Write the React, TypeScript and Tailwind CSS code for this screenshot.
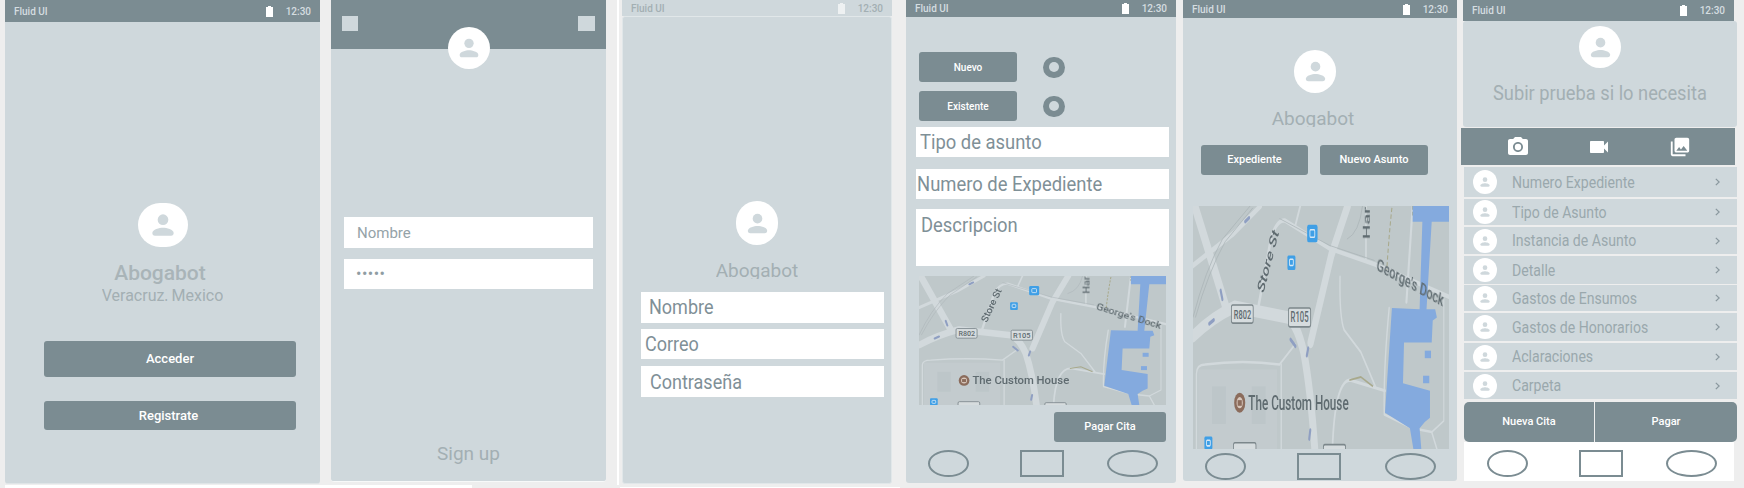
import React from "react";
import { MdPhotoCamera, MdVideocam, MdPhotoLibrary } from "react-icons/md";

function Person({ className }: { className: string }) {
  return (
    <svg viewBox="0 0 24 24" className={className} fill="currentColor" preserveAspectRatio="none">
      <circle cx="12" cy="8" r="4" />
      <path d="M4 18c0-2.7 5.3-4 8-4s8 1.3 8 4c0 1.2-.6 2-2 2H6c-1.4 0-2-.8-2-2z" />
    </svg>
  );
}

function Avatar({ className, icon = "w-[30px] h-[30px]" }: { className: string; icon?: string }) {
  return (
    <div className={"flex items-center justify-center rounded-full bg-white text-[#cfd8dc] shrink-0 " + className}>
      <Person className={icon} />
    </div>
  );
}

function Status({ className, textClass, iconColor = "bg-white" }: { className: string; textClass: string; iconColor?: string }) {
  return (
    <div className={"flex items-center justify-between px-[9px] text-[10px] font-medium shrink-0 " + className + " " + textClass}>
      <span>Fluid UI</span>
      <span className="flex items-center gap-[13px]">
        <span className="flex flex-col items-center">
          <span className={"w-[3px] h-[1px] " + iconColor} />
          <span className={"w-[7px] h-[10px] " + iconColor} />
        </span>
        <span>12:30</span>
      </span>
    </div>
  );
}

function Btn({ className, children }: { className: string; children: React.ReactNode }) {
  return (
    <div className={"flex items-center justify-center bg-[#7b8c92] text-white font-medium shrink-0 " + className}>
      {children}
    </div>
  );
}

function Nav({ className, o1, r, o2 }: { className: string; o1: string; r: string; o2: string }) {
  return (
    <div className={"flex h-[27px] shrink-0 " + className}>
      <div className={"h-[27px] w-[41px] rounded-[50%] border-2 border-[#7b8c92] " + o1} />
      <div className={"h-[27px] w-[44px] border-2 border-[#7b8c92] " + r} />
      <div className={"h-[27px] w-[51px] rounded-[50%] border-2 border-[#7b8c92] " + o2} />
    </div>
  );
}

function Field({ className, children }: { className: string; children: React.ReactNode }) {
  return <div className={"flex bg-white text-[#7f9097] text-[20px] shrink-0 overflow-hidden " + className}>{children}</div>;
}

function Sq({ className, children }: { className: string; children: React.ReactNode }) {
  return <span className={"inline-block whitespace-nowrap origin-left " + className}>{children}</span>;
}

function Radio() {
  return (
    <div className="ml-[26px] w-[22px] h-[21px] rounded-full bg-[#7b8c92] flex items-center justify-center">
      <div className="w-[10px] h-[10px] rounded-full bg-[#cfd8dc]" />
    </div>
  );
}

function MapView({ className }: { className: string }) {
  const road = "#d2d9dc";
  const rail = "#a9b3b6";
  const arrow = "#8f9fc2";
  return (
    <svg viewBox="45 17 740 388" preserveAspectRatio="none" className={"block shrink-0 blur-[0.6px] " + className}>
      <rect x="45" y="17" width="740" height="388" fill="#bfc8ca" />
      <rect x="60" y="278" width="228" height="127" fill="#c3cbce" />
      <rect x="100" y="305" width="40" height="60" fill="#bdc6c9" />
      <rect x="215" y="305" width="40" height="60" fill="#bdc6c9" />
      <g fill="none" stroke={road} strokeLinecap="round" strokeLinejoin="round">
        <path d="M45 225Q100 195 165 178L320 195Q345 205 365 250Q385 310 397 405" strokeWidth="20" />
        <path d="M50 17L140 178" strokeWidth="20" />
        <path d="M492 17L445 95L385 235" strokeWidth="18" />
        <path d="M45 112L160 62L240 17" strokeWidth="9" />
        <path d="M235 175L270 70Q285 40 310 40L440 85L570 110L785 162" strokeWidth="7" />
        <path d="M340 50L355 17" strokeWidth="5" />
        <path d="M545 17V105" strokeWidth="5" />
        <path d="M470 130Q468 195 482 215L530 250L572 305" strokeWidth="4" />
        <path d="M680 17L662 170" strokeWidth="6" />
        <path d="M448 405Q455 295 500 295L600 312" strokeWidth="5" />
        <path d="M55 405V285Q55 270 80 270Q190 262 295 270L340 238" strokeWidth="4" />
        <path d="M300 270V405" strokeWidth="4" />
        <path d="M612 180Q595 280 598 350L680 372L735 378L750 405" strokeWidth="4" />
        <path d="M770 165V360L735 378" strokeWidth="3" />
      </g>
      <g fill="none" stroke={rail} strokeWidth="1.5">
        <path d="M45 195Q80 120 130 70L210 17" />
        <path d="M52 195Q88 124 138 74L218 20" />
        <path d="M295 37L440 80L570 104" />
        <path d="M490 70Q525 60 535 17" />
      </g>
      <path d="M620 20Q612 60 605 120" fill="none" stroke="#a8a98c" strokeWidth="3" strokeDasharray="7 4" />
      <path d="M680 17V33" fill="none" stroke="#a8a98c" strokeWidth="3" strokeDasharray="6 3" />
      <path d="M497 295L530 290L565 305" fill="none" stroke="#a8a98c" strokeWidth="3" />
      <path fill="#84aade" d="M680 17H785V42H735L720 182H745L750 195L738 200L735 235H655L652 300L730 312V355L715 362L700 372L705 405H682L672 372L600 347L620 180L700 182L708 42H680Z" />
      <rect x="715" y="248" width="18" height="12" fill="#84aade" />
      <rect x="710" y="288" width="18" height="12" fill="#84aade" />
      <g fill="#d6dcde" stroke="#7c878b" strokeWidth="2.5">
        <rect x="156" y="175" width="63" height="29" rx="4" />
        <rect x="321" y="180" width="64" height="30" rx="4" />
        <rect x="162" y="395" width="65" height="30" rx="4" />
        <rect x="422" y="398" width="64" height="30" rx="4" />
      </g>
      <g fill="#5f6b70" fontWeight="500">
        <text x="188" y="197" fontSize="20" textAnchor="middle" textLength="50" lengthAdjust="spacingAndGlyphs">R802</text>
        <text x="353" y="203" fontSize="22" textAnchor="middle" textLength="52" lengthAdjust="spacingAndGlyphs">R105</text>
        <text transform="translate(248 158) rotate(-65)" fontSize="29" textLength="108" lengthAdjust="spacingAndGlyphs">Store St</text>
        <text transform="translate(557 70) rotate(-90)" fontSize="26" textLength="52" lengthAdjust="spacingAndGlyphs">Har</text>
        <text transform="translate(574 118) rotate(17)" fontSize="26" textLength="202" lengthAdjust="spacingAndGlyphs">George's Dock</text>
        <text x="205" y="342" fontSize="31" textLength="290" lengthAdjust="spacingAndGlyphs">The Custom House</text>
      </g>
      <circle cx="180" cy="331" r="16" fill="#8b6c5c" />
      <circle cx="180" cy="331" r="9" fill="#d8c8bd" />
      <rect x="174" y="327" width="12" height="9" fill="#8b6c5c" />
      <g fill="#3f9fe6">
        <rect x="375" y="47" width="30" height="28" rx="4" />
        <rect x="318" y="96" width="23" height="23" rx="3" />
        <rect x="78" y="385" width="23" height="21" rx="3" />
      </g>
      <g fill="none" stroke="#d6e8f6" strokeWidth="2.5">
        <rect x="383" y="55" width="14" height="12" rx="2" />
        <rect x="324" y="102" width="11" height="10" rx="2" />
        <rect x="84" y="391" width="11" height="9" rx="2" />
      </g>
      <g stroke={arrow} strokeWidth="6" strokeLinecap="round">
        <path d="M125 152L130 166" />
        <path d="M92 205L105 199" />
        <path d="M327 230L341 241" />
        <path d="M374 256L378 244" />
        <path d="M381 389L384 375" />
        <path d="M196 42L207 36" />
      </g>
    </svg>
  );
}

const rows = [
  { label: "Numero Expediente", cls: "h-[30px] mt-[2px]" },
  { label: "Tipo de Asunto", cls: "h-[26px] mt-[2px]" },
  { label: "Instancia de Asunto", cls: "h-[27px] mt-[2px]" },
  { label: "Detalle", cls: "h-[28px] mt-[2px]" },
  { label: "Gastos de Ensumos", cls: "h-[26px] mt-[1px]" },
  { label: "Gastos de Honorarios", cls: "h-[28px] mt-[2px]" },
  { label: "Aclaraciones", cls: "h-[27px] mt-[2px]" },
  { label: "Carpeta", cls: "h-[27px] mt-[2px]" },
];

export default function App() {
  return (
    <div className="w-[1744px] h-[488px] bg-[#eeeeee] flex flex-col overflow-hidden font-['Roboto',sans-serif]">
      <div className="flex items-start h-[485px] shrink-0">
        {/* Screen 1 */}
        <div className="ml-[5px] w-[315px] h-[484px] shrink-0 bg-[#cfd8dc] border-b border-[#dfe5e7] rounded-b-[3px] flex flex-col items-center">
          <Status className="h-[22px] w-full bg-[#7b8c92]" textClass="text-[#d5dde0]" />
          <Avatar className="w-[50px] h-[44px] mt-[181px]" icon="w-[32px] h-[32px]" />
          <div className="mt-[12px] h-[28px] -ml-[5px] text-[21px] leading-[28px] font-medium text-[#a9b4b8]">Abogabot</div>
          <div className="-mt-[1px] h-[15px] overflow-hidden text-[16px] leading-[20px] text-[#a3afb3]">Veracruz, Mexico</div>
          <Btn className="mt-[40px] self-start ml-[39px] w-[252px] h-[36px] rounded-[3px] text-[13px]">Acceder</Btn>
          <Btn className="mt-[24px] self-start ml-[39px] w-[252px] h-[29px] rounded-[3px] text-[13px] pr-[3px]">Registrate</Btn>
        </div>

        {/* Screen 2 */}
        <div className="ml-[11px] w-[275px] h-[482px] shrink-0 bg-[#cfd8dc] border-b border-[#f7f9f9] rounded-b-[3px] flex flex-col">
          <div className="h-[49px] shrink-0 bg-[#7b8c92] flex justify-between items-start pt-[16px] px-[11px]">
            <div className="w-[16px] h-[15px] bg-[#cfd8dc]" />
            <div className="w-[17px] h-[15px] bg-[#cfd8dc]" />
          </div>
          <Avatar className="w-[42px] h-[42px] -mt-[22px] self-center" icon="w-[28px] h-[28px]" />
          <div className="mt-[148px] mx-[13px] h-[31px] bg-white shrink-0 flex items-center pl-[13px] pt-[1px] text-[15px] text-[#95a3a8]">Nombre</div>
          <div className="mt-[11px] mx-[13px] h-[30px] bg-white shrink-0 flex items-center pl-[12px] text-[16px] tracking-[0.5px] text-[#8f9da3]">•••••</div>
          <div className="mt-[152px] h-[26px] text-center text-[19px] leading-[26px] text-[#a3afb3]">Sign up</div>
        </div>

        <div className="ml-[11px] w-[2px] h-full shrink-0 bg-white" />

        {/* Screen 3 */}
        <div className="ml-[3px] w-[270px] h-[484px] shrink-0 flex flex-col">
          <Status className="h-[16px] bg-[#cfd8dc]" textClass="text-[#a3afb3]" iconColor="bg-[#eef1f2]" />
          <div className="flex-1 bg-[#cfd8dc] border border-[#e1e7e9] rounded-[3px] flex flex-col items-center">
            <Avatar className="w-[42px] h-[44px] mt-[184px]" icon="w-[29px] h-[29px]" />
            <div className="mt-[16px] h-[18px] overflow-hidden text-[19px] leading-[20px] text-[#a3afb3]">Abogabot</div>
            <Field className="mt-[13px] self-start ml-[18px] w-[243px] h-[31px] items-center pl-[8px] pb-[1px]"><Sq className="scale-x-[0.9]">Nombre</Sq></Field>
            <Field className="mt-[6px] self-start ml-[18px] w-[243px] h-[30px] items-center pl-[4px]"><Sq className="scale-x-[0.9]">Correo</Sq></Field>
            <Field className="mt-[7px] self-start ml-[18px] w-[243px] h-[31px] items-center pl-[9px]"><Sq className="scale-x-[0.9]">Contraseña</Sq></Field>
          </div>
        </div>

        {/* Screen 4 */}
        <div className="ml-[14px] w-[270px] h-[483px] shrink-0 bg-[#cfd8dc] rounded-b-[3px] flex flex-col">
          <Status className="h-[17px] bg-[#7b8c92]" textClass="text-[#d5dde0]" />
          <div className="mt-[35px] ml-[13px] flex items-center shrink-0">
            <Btn className="w-[98px] h-[30px] rounded-[3px] text-[10px]">Nuevo</Btn>
            <Radio />
          </div>
          <div className="mt-[9px] ml-[13px] flex items-center shrink-0">
            <Btn className="w-[98px] h-[30px] rounded-[3px] text-[10px]">Existente</Btn>
            <Radio />
          </div>
          <Field className="mt-[6px] ml-[10px] w-[253px] h-[30px] items-center pl-[4px]"><Sq className="scale-x-[0.92]">Tipo de asunto</Sq></Field>
          <Field className="mt-[12px] ml-[10px] w-[253px] h-[30px] items-center pl-[1px]"><Sq className="scale-x-[0.92]">Numero de Expediente</Sq></Field>
          <Field className="mt-[10px] ml-[10px] w-[253px] h-[57px] items-start pl-[5px] pt-[1px]"><Sq className="scale-x-[0.92]">Descripcion</Sq></Field>
          <MapView className="mt-[10px] ml-[13px] w-[247px] h-[129px]" />
          <Btn className="mt-[7px] self-end mr-[10px] w-[112px] h-[30px] rounded-[3px] text-[11px]">Pagar Cita</Btn>
          <Nav className="mt-[8px] ml-[22px]" o1="" r="ml-[51px]" o2="ml-[43px]" />
        </div>

        {/* Screen 5 */}
        <div className="ml-[7px] w-[274px] h-[481px] shrink-0 bg-[#cfd8dc] rounded-b-[3px] flex flex-col">
          <Status className="h-[18px] bg-[#7b8c92]" textClass="text-[#d5dde0]" />
          <Avatar className="w-[42px] h-[43px] mt-[32px] ml-[111px]" icon="w-[29px] h-[29px]" />
          <div className="mt-[16px] h-[18px] overflow-hidden text-center text-[19px] leading-[20px] text-[#a3afb3] pr-[14px]">Abogabot</div>
          <div className="mt-[18px] ml-[18px] flex gap-[12px] shrink-0">
            <Btn className="w-[107px] h-[30px] rounded-[3px] text-[11px]">Expediente</Btn>
            <Btn className="w-[108px] h-[30px] rounded-[3px] text-[11px]">Nuevo Asunto</Btn>
          </div>
          <MapView className="mt-[31px] ml-[10px] w-[256px] h-[243px]" />
          <Nav className="mt-[4px] ml-[22px]" o1="" r="ml-[51px]" o2="ml-[44px]" />
        </div>

        {/* Screen 6 */}
        <div className="ml-[6px] w-[274px] h-[481px] shrink-0 flex flex-col">
          <Status className="h-[21px] w-[271px] bg-[#7b8c92]" textClass="text-[#d5dde0]" />
          <div className="h-[106px] shrink-0 bg-[#cfd8dc] rounded-[3px] flex flex-col items-center">
            <Avatar className="w-[42px] h-[42px] mt-[5px]" icon="w-[29px] h-[29px]" />
            <div className="mt-[12px] h-[26px] text-[21px] leading-[26px] text-[#a3afb3] whitespace-nowrap scale-x-[0.87]">Subir prueba si lo necesita</div>
          </div>
          <div className="mt-[1px] -ml-[2px] w-[274px] h-[37px] shrink-0 bg-[#7b8c92] text-white flex items-center">
            <MdPhotoCamera className="w-[24px] h-[24px] ml-[45px]" />
            <MdVideocam className="w-[24px] h-[24px] ml-[57px]" />
            <MdPhotoLibrary className="w-[22px] h-[22px] ml-[58px]" />
          </div>
          {rows.map((r) => (
            <div key={r.label} className={"w-[273px] ml-[1px] shrink-0 bg-[#cfd8dc] flex items-center " + r.cls}>
              <Avatar className="ml-[9px] w-[24px] h-[24px]" icon="w-[14px] h-[14px]" />
              <Sq className="ml-[15px] mt-[1px] text-[16px] text-[#9aa8ad] scale-x-[0.88]">{r.label}</Sq>
              <svg viewBox="0 0 6 10" className="ml-auto mr-[17px] w-[5px] h-[8px]" fill="none" stroke="#8a989e" strokeWidth="1.5" preserveAspectRatio="none">
                <path d="M1 1l4 4-4 4" />
              </svg>
            </div>
          ))}
          <div className="mt-[3px] flex shrink-0 h-[40px]">
            <Btn className="w-[130px] h-[40px] rounded-l-[5px] ml-[1px] text-[11px]">Nueva Cita</Btn>
            <Btn className="w-[142px] h-[40px] ml-[1px] rounded-r-[5px] text-[11px]">Pagar</Btn>
          </div>
          <div className="w-[270px] ml-[1px] h-[39px] bg-white shrink-0 pt-[8px]">
            <Nav className="ml-[23px]" o1="" r="ml-[51px]" o2="ml-[43px]" />
          </div>
        </div>
      </div>

      {/* Strip of white along the bottom edge */}
      <div className="flex h-[3px] shrink-0">
        <div className="ml-[5px] w-[467px] h-[3px] bg-white" />
        <div className="ml-[148px] w-[280px] h-[1px] mt-[2px] bg-white" />
      </div>
    </div>
  );
}
